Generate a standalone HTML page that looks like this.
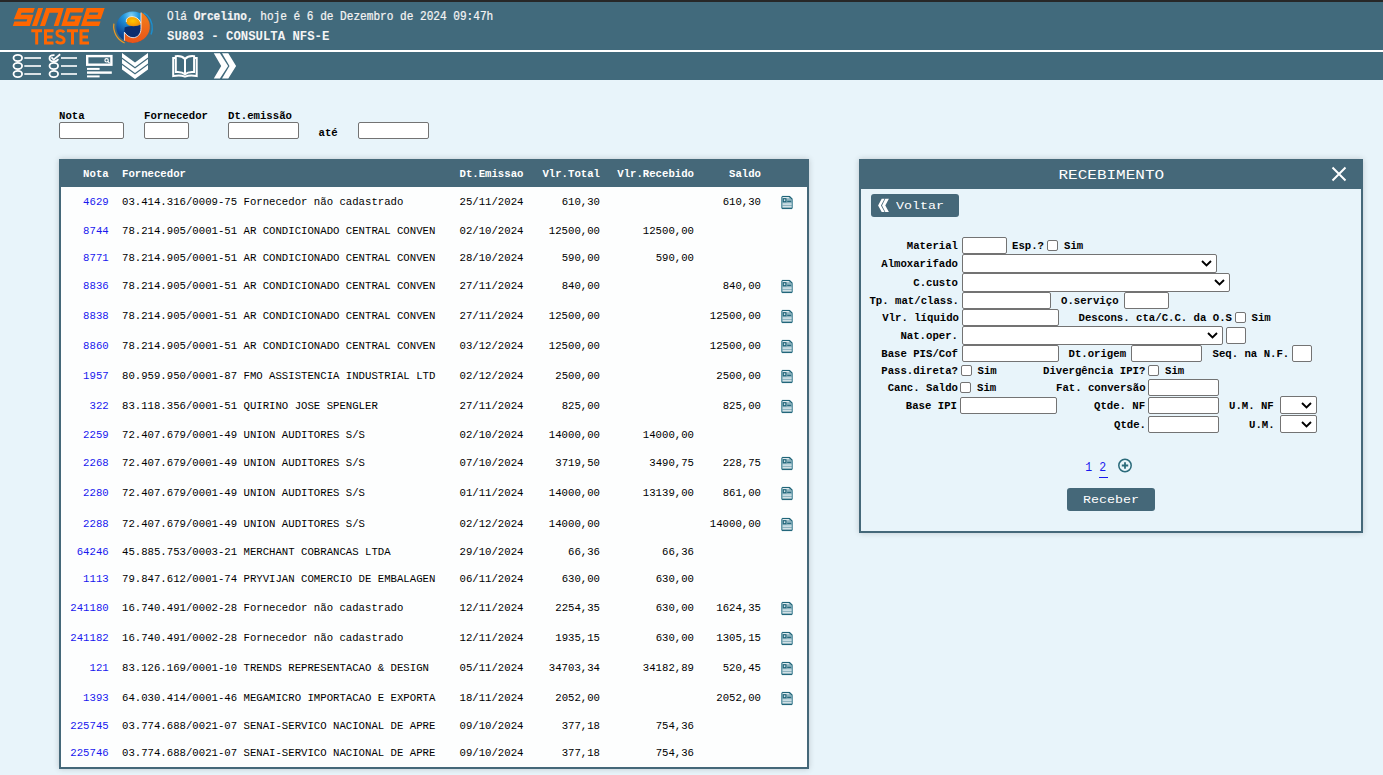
<!DOCTYPE html>
<html><head><meta charset="utf-8"><title>SU803 - CONSULTA NFS-E</title>
<style>
html,body{margin:0;padding:0;}
body{width:1383px;height:775px;overflow:hidden;position:relative;background:#e8f4fa;font-family:"Liberation Mono", monospace;}
.t{position:absolute;white-space:pre;font-family:"Liberation Mono", monospace;}
.abs{position:absolute;}
.inp{position:absolute;box-sizing:border-box;background:#fff;border:1px solid #737373;border-radius:2px;}
.chk{position:absolute;box-sizing:border-box;width:11px;height:11px;background:#fff;border:1px solid #737373;border-radius:2px;}
.btn{position:absolute;background:#456879;border-radius:3px;}
.ic{position:absolute;width:12px;height:15px;}
.ic svg{display:block}
.hdr{position:absolute;left:0;top:0;width:1383px;height:80px;background:#416a7c;}
.tbl{position:absolute;left:59px;top:159px;width:750px;height:610px;box-sizing:border-box;border:2px solid #456879;background:#fdfefe;box-shadow:0 0 6px rgba(0,0,0,.18);}
.thd{position:absolute;left:59px;top:159px;width:750px;height:28px;background:#456879;}
.pnl{position:absolute;left:859px;top:159px;width:504px;height:374px;box-sizing:border-box;border:2px solid #456879;background:#e8f4fa;box-shadow:0 0 6px rgba(0,0,0,.18);}
.phd{position:absolute;left:859px;top:159px;width:504px;height:30px;background:#456879;}
</style></head><body>
<div class="hdr"></div>
<div class="abs" style="left:0;top:0;width:1383px;height:2px;background:#272727"></div>
<div class="abs" style="left:0;top:50px;width:1383px;height:2px;background:#fff"></div>
<svg class="abs" style="left:0;top:0" width="160" height="50" viewBox="0 0 160 50">
 <g fill="#ff6600" transform="matrix(1,0,-0.342,1,8.892,0)">
  <path d="M12.3 8 H28.6 V12.8 H17 V14.8 H29.7 V26 H12.8 V21.5 H25 V19.3 H11.6 Z"/>
  <path d="M32 8 H37 V26 H32 Z"/>
  <path d="M40 8 H57.6 L58.4 26 H53.7 V12.8 H45 V26 H40 Z"/>
  <path d="M60.5 8 H77.8 V12.6 H65.5 V21.45 H73 V19.5 H68 V15.66 H78.3 V26 H61.3 Z"/>
  <path fill-rule="evenodd" d="M80.5 8 H98.5 V19.1 H85 V21.45 H99 V26 H81 Z M85 12.4 H93.7 V14.76 H85 Z"/>
 </g>
 <g fill="#ff6600">
  <path d="M31.3 29.3 H42 V32.3 H38.2 V44.5 H35.2 V32.3 H31.3 Z"/>
  <path d="M44 29.3 H53.5 V32.3 H47 V35.5 H52.5 V38.4 H47 V41.5 H53.5 V44.5 H44 Z"/>
  <path d="M67 29.3 H78 V32.3 H74 V44.5 H71 V32.3 H67 Z"/>
  <path d="M79.5 29.3 H89 V32.3 H82.5 V35.5 H88 V38.4 H82.5 V41.5 H89 V44.5 H79.5 Z"/>
 </g>
 <path d="M64.1 32.4 C63.3 31.2 62.1 30.7 60.4 30.7 C58.2 30.7 56.9 31.8 56.9 33.5 C56.9 35.4 58.6 36.1 60.5 36.7 C62.8 37.4 64.2 38.4 64.2 40.3 C64.2 42.2 62.6 43.1 60.4 43.1 C58.5 43.1 57 42.4 56.1 41.1" fill="none" stroke="#ff6600" stroke-width="2.8"/>
 <defs>
  <radialGradient id="gb" cx="0.45" cy="0.12" r="0.95">
   <stop offset="0" stop-color="#7fd0f6"/><stop offset="0.25" stop-color="#2196dc"/><stop offset="0.65" stop-color="#0f4f9e"/><stop offset="1" stop-color="#0a3276"/>
  </radialGradient>
  <radialGradient id="gy" cx="0.45" cy="0.45" r="0.65">
   <stop offset="0" stop-color="#ffc700"/><stop offset="0.7" stop-color="#f59a00"/><stop offset="1" stop-color="#e07a10"/>
  </radialGradient>
  <linearGradient id="go" x1="0" y1="0" x2="0" y2="1">
   <stop offset="0" stop-color="#f2801c"/><stop offset="1" stop-color="#ea5418"/>
  </linearGradient>
 </defs>
 <g transform="translate(116.3,11.4)">
  <path d="M-2.4 12.3 C-3.6 20 0.5 28.3 8.3 31.6" fill="none" stroke="#f39a1e" stroke-width="1.2"/>
  <path d="M27.3 1.5 C33 4.3 36.6 11 35.9 18.2 C35.7 19.9 35.3 21.5 34.7 23" fill="none" stroke="#1b8fd0" stroke-width="1.4"/>
  <ellipse cx="16.5" cy="15.65" rx="16.5" ry="15.65" fill="url(#gb)"/>
  <path d="M8.3 16 C11 14.6 21 14.2 24.6 13.6 V23 C22.5 25.5 19.5 26.4 16.7 26.3 C13 26.1 10 23.5 8.1 20.8 Z" fill="#0b2d6e"/>
  <path d="M24.6 11.9 C23 7 19 5.25 15.6 5.25 C12 5.25 9.8 7.2 9.8 9.6 C9.8 12.8 12.5 14.8 17 14.8 C20 14.8 23 14 24.6 12.8 Z" fill="url(#gy)"/>
  <path d="M10.1 10.6 C9.4 7.4 12 5.25 15.6 5.25 C19 5.25 22.8 7 24.4 11.5" fill="none" stroke="#fff" stroke-width="0.8"/>
  <path d="M24.7 0.95 A16.5 15.65 0 0 1 8.1 29.4 V20.8 C10 23.6 13 26.3 16.7 26.3 C21 26.3 24.7 23 24.7 17 Z" fill="url(#go)"/>
  <path d="M24.7 1.2 V17 C24.7 23 21 26.3 16.7 26.3 C13 26.3 10 23.6 8.1 20.8 V29.2" fill="none" stroke="#fff" stroke-width="0.8"/>
 </g>
</svg>
<div class="t" style="left:167px;top:10.2px;font-size:11.1px;line-height:14px;color:#f4f4f4;-webkit-text-stroke:0.2px #f4f4f4;transform:scaleY(1.12);transform-origin:0 11px">Olá <b>Orcelino</b>, hoje é 6 de Dezembro de 2024 09:47h</div>
<div class="t" style="left:167px;top:29px;font-size:12.3px;line-height:16px;color:#f4f4f4;font-weight:bold;transform:scaleY(1.05);transform-origin:0 12px">SU803 - CONSULTA NFS-E</div>
<svg class="abs" style="left:0;top:52px" width="250" height="28" viewBox="0 52 250 28">
 <g fill="none" stroke="#fff" stroke-width="1.8">
  <ellipse cx="17.8" cy="58" rx="4.3" ry="3.1"/>
  <ellipse cx="17.8" cy="66" rx="4.3" ry="3.1"/>
  <ellipse cx="17.8" cy="74" rx="4.3" ry="3.1"/>
  <ellipse cx="53.8" cy="66" rx="4.3" ry="3.1"/>
  <ellipse cx="53.8" cy="74" rx="4.3" ry="3.1"/>
  <path d="M54.5 55.2 C54.2 55.2 54 55.2 53.8 55.2 C51.3 55.2 49.5 56.5 49.5 58.3 C49.5 60.1 51.3 61.5 53.8 61.5 C56.1 61.5 57.8 60.4 58 58.9"/>
  <path d="M51.4 57.4 L53.7 59.6 L60.2 54.2" stroke-width="1.8"/>
 </g>
 <g fill="#d9e1e5">
  <rect x="24.3" y="57" width="16.7" height="2"/>
  <rect x="24.3" y="65" width="16.7" height="2"/>
  <rect x="24.3" y="73" width="16.7" height="2"/>
  <rect x="61" y="57" width="16" height="2"/>
  <rect x="61" y="65" width="16" height="2"/>
  <rect x="61" y="73" width="16" height="2"/>
 </g>
 <rect x="87.2" y="56.1" width="24.2" height="8.6" fill="none" stroke="#fff" stroke-width="2.4"/>
 <circle cx="106.6" cy="60.3" r="1.7" fill="none" stroke="#fff" stroke-width="1.2"/>
 <path d="M107.8 61.5 L109.6 63.2" stroke="#fff" stroke-width="1.2"/>
 <g fill="#fff">
  <rect x="87" y="67.9" width="12.6" height="2"/>
  <rect x="87" y="71.4" width="24.8" height="2.4"/>
  <rect x="87" y="75.4" width="12.6" height="2"/>
 </g>
 <g fill="#fff">
  <path d="M122 53.1 L135 62.6 L148 53.1 V57.6 L135 67.1 L122 57.6 Z"/>
  <path d="M122 59 L135 68.5 L148 59 V63.5 L135 73 L122 63.5 Z"/>
  <path d="M122 64.9 L135 74.4 L148 64.9 V69.5 L135 79 L122 69.5 Z"/>
 </g>
 <g fill="none" stroke="#fff" stroke-width="2">
  <path d="M175.8 56.2 C179.5 55.8 183 56.8 185 59 C187 56.8 190.5 55.8 194.1 56.2 V72 C190.5 71.6 187 72.4 185 74.2 C183 72.4 179.5 71.6 175.8 72 Z"/>
  <path d="M185 59 V74.2"/>
  <path d="M175.8 58 H173.2 V76 C177 75.3 181.5 75.2 185 76.6 C188.5 75.2 193 75.3 196.7 76 V58 H194.1"/>
 </g>
 <g fill="#fff">
  <path d="M213.8 53.3 H219.9 L228.1 65.9 L219.9 78.5 H213.8 L221.2 65.9 Z"/>
  <path d="M222 53.3 H228.3 L236.1 65.9 L228.3 78.5 H222 L229.5 65.9 Z"/>
 </g>
</svg>

<div class="t" style="left:59px;top:109.66px;font-size:10.667px;line-height:13px;font-weight:bold;color:#000;">Nota</div>
<div class="t" style="left:144px;top:109.66px;font-size:10.667px;line-height:13px;font-weight:bold;color:#000;">Fornecedor</div>
<div class="t" style="left:228px;top:109.66px;font-size:10.667px;line-height:13px;font-weight:bold;color:#000;">Dt.emissão</div>
<div class="t" style="left:318.5px;top:126.66px;font-size:10.667px;line-height:13px;font-weight:bold;color:#000;">até</div>
<div class="inp" style="left:59px;top:122px;width:65px;height:17px;"></div>
<div class="inp" style="left:144px;top:122px;width:45px;height:17px;"></div>
<div class="inp" style="left:228px;top:122px;width:71px;height:17px;"></div>
<div class="inp" style="left:358px;top:122px;width:71px;height:17px;"></div>
<div class="tbl"></div>
<div class="thd"></div>
<div class="t" style="right:1274.3px;top:167.66px;font-size:10.667px;line-height:13px;font-weight:bold;color:#fff;">Nota</div>
<div class="t" style="left:122px;top:167.66px;font-size:10.667px;line-height:13px;font-weight:bold;color:#fff;">Fornecedor</div>
<div class="t" style="left:459.5px;top:167.66px;font-size:10.667px;line-height:13px;font-weight:bold;color:#fff;">Dt.Emissao</div>
<div class="t" style="right:783px;top:167.66px;font-size:10.667px;line-height:13px;font-weight:bold;color:#fff;">Vlr.Total</div>
<div class="t" style="right:689px;top:167.66px;font-size:10.667px;line-height:13px;font-weight:bold;color:#fff;">Vlr.Recebido</div>
<div class="t" style="right:622px;top:167.66px;font-size:10.667px;line-height:13px;font-weight:bold;color:#fff;">Saldo</div>
<div class="t" style="right:1274.3px;top:195.66px;font-size:10.667px;line-height:13px;font-weight:normal;color:#1818ee;">4629</div>
<div class="t" style="left:122px;top:195.66px;font-size:10.667px;line-height:13px;font-weight:normal;color:#000;">03.414.316/0009-75 Fornecedor não cadastrado</div>
<div class="t" style="left:459.5px;top:195.66px;font-size:10.667px;line-height:13px;font-weight:normal;color:#000;">25/11/2024</div>
<div class="t" style="right:783px;top:195.66px;font-size:10.667px;line-height:13px;font-weight:normal;color:#000;">610,30</div>
<div class="t" style="right:622px;top:195.66px;font-size:10.667px;line-height:13px;font-weight:normal;color:#000;">610,30</div>
<div class="ic" style="left:781px;top:195px"><svg width="12" height="15" viewBox="0 0 12 15"><path d="M1.5 1.4 H8.5 L11.3 4.2 V13 Q11.3 13.6 10.7 13.6 H1.3 Q0.7 13.6 0.7 13 V2.2 Q0.7 1.4 1.5 1.4Z" fill="#8db3bf" stroke="#3a7d8f" stroke-width="0.9"/><path d="M1.2 1.5 H8.6 L11.2 4.1" fill="none" stroke="#1f6478" stroke-width="1.2"/><rect x="1.9" y="2.3" width="6" height="0.9" fill="#fff"/><rect x="2.3" y="3.7" width="2.6" height="3" fill="#cfe0e5" stroke="#1f6478" stroke-width="1.1"/><rect x="6.2" y="5.8" width="4" height="1.1" fill="#1f6478"/><rect x="1.7" y="8.2" width="8.8" height="1.8" fill="#c9dde3"/><rect x="1.7" y="11.4" width="8.8" height="1.1" fill="#fff"/><path d="M1 13.3 H11" stroke="#1f6478" stroke-width="1.2"/></svg></div>
<div class="t" style="right:1274.3px;top:224.66px;font-size:10.667px;line-height:13px;font-weight:normal;color:#1818ee;">8744</div>
<div class="t" style="left:122px;top:224.66px;font-size:10.667px;line-height:13px;font-weight:normal;color:#000;">78.214.905/0001-51 AR CONDICIONADO CENTRAL CONVEN</div>
<div class="t" style="left:459.5px;top:224.66px;font-size:10.667px;line-height:13px;font-weight:normal;color:#000;">02/10/2024</div>
<div class="t" style="right:783px;top:224.66px;font-size:10.667px;line-height:13px;font-weight:normal;color:#000;">12500,00</div>
<div class="t" style="right:689px;top:224.66px;font-size:10.667px;line-height:13px;font-weight:normal;color:#000;">12500,00</div>
<div class="t" style="right:1274.3px;top:251.66px;font-size:10.667px;line-height:13px;font-weight:normal;color:#1818ee;">8771</div>
<div class="t" style="left:122px;top:251.66px;font-size:10.667px;line-height:13px;font-weight:normal;color:#000;">78.214.905/0001-51 AR CONDICIONADO CENTRAL CONVEN</div>
<div class="t" style="left:459.5px;top:251.66px;font-size:10.667px;line-height:13px;font-weight:normal;color:#000;">28/10/2024</div>
<div class="t" style="right:783px;top:251.66px;font-size:10.667px;line-height:13px;font-weight:normal;color:#000;">590,00</div>
<div class="t" style="right:689px;top:251.66px;font-size:10.667px;line-height:13px;font-weight:normal;color:#000;">590,00</div>
<div class="t" style="right:1274.3px;top:279.66px;font-size:10.667px;line-height:13px;font-weight:normal;color:#1818ee;">8836</div>
<div class="t" style="left:122px;top:279.66px;font-size:10.667px;line-height:13px;font-weight:normal;color:#000;">78.214.905/0001-51 AR CONDICIONADO CENTRAL CONVEN</div>
<div class="t" style="left:459.5px;top:279.66px;font-size:10.667px;line-height:13px;font-weight:normal;color:#000;">27/11/2024</div>
<div class="t" style="right:783px;top:279.66px;font-size:10.667px;line-height:13px;font-weight:normal;color:#000;">840,00</div>
<div class="t" style="right:622px;top:279.66px;font-size:10.667px;line-height:13px;font-weight:normal;color:#000;">840,00</div>
<div class="ic" style="left:781px;top:279px"><svg width="12" height="15" viewBox="0 0 12 15"><path d="M1.5 1.4 H8.5 L11.3 4.2 V13 Q11.3 13.6 10.7 13.6 H1.3 Q0.7 13.6 0.7 13 V2.2 Q0.7 1.4 1.5 1.4Z" fill="#8db3bf" stroke="#3a7d8f" stroke-width="0.9"/><path d="M1.2 1.5 H8.6 L11.2 4.1" fill="none" stroke="#1f6478" stroke-width="1.2"/><rect x="1.9" y="2.3" width="6" height="0.9" fill="#fff"/><rect x="2.3" y="3.7" width="2.6" height="3" fill="#cfe0e5" stroke="#1f6478" stroke-width="1.1"/><rect x="6.2" y="5.8" width="4" height="1.1" fill="#1f6478"/><rect x="1.7" y="8.2" width="8.8" height="1.8" fill="#c9dde3"/><rect x="1.7" y="11.4" width="8.8" height="1.1" fill="#fff"/><path d="M1 13.3 H11" stroke="#1f6478" stroke-width="1.2"/></svg></div>
<div class="t" style="right:1274.3px;top:309.66px;font-size:10.667px;line-height:13px;font-weight:normal;color:#1818ee;">8838</div>
<div class="t" style="left:122px;top:309.66px;font-size:10.667px;line-height:13px;font-weight:normal;color:#000;">78.214.905/0001-51 AR CONDICIONADO CENTRAL CONVEN</div>
<div class="t" style="left:459.5px;top:309.66px;font-size:10.667px;line-height:13px;font-weight:normal;color:#000;">27/11/2024</div>
<div class="t" style="right:783px;top:309.66px;font-size:10.667px;line-height:13px;font-weight:normal;color:#000;">12500,00</div>
<div class="t" style="right:622px;top:309.66px;font-size:10.667px;line-height:13px;font-weight:normal;color:#000;">12500,00</div>
<div class="ic" style="left:781px;top:309px"><svg width="12" height="15" viewBox="0 0 12 15"><path d="M1.5 1.4 H8.5 L11.3 4.2 V13 Q11.3 13.6 10.7 13.6 H1.3 Q0.7 13.6 0.7 13 V2.2 Q0.7 1.4 1.5 1.4Z" fill="#8db3bf" stroke="#3a7d8f" stroke-width="0.9"/><path d="M1.2 1.5 H8.6 L11.2 4.1" fill="none" stroke="#1f6478" stroke-width="1.2"/><rect x="1.9" y="2.3" width="6" height="0.9" fill="#fff"/><rect x="2.3" y="3.7" width="2.6" height="3" fill="#cfe0e5" stroke="#1f6478" stroke-width="1.1"/><rect x="6.2" y="5.8" width="4" height="1.1" fill="#1f6478"/><rect x="1.7" y="8.2" width="8.8" height="1.8" fill="#c9dde3"/><rect x="1.7" y="11.4" width="8.8" height="1.1" fill="#fff"/><path d="M1 13.3 H11" stroke="#1f6478" stroke-width="1.2"/></svg></div>
<div class="t" style="right:1274.3px;top:339.66px;font-size:10.667px;line-height:13px;font-weight:normal;color:#1818ee;">8860</div>
<div class="t" style="left:122px;top:339.66px;font-size:10.667px;line-height:13px;font-weight:normal;color:#000;">78.214.905/0001-51 AR CONDICIONADO CENTRAL CONVEN</div>
<div class="t" style="left:459.5px;top:339.66px;font-size:10.667px;line-height:13px;font-weight:normal;color:#000;">03/12/2024</div>
<div class="t" style="right:783px;top:339.66px;font-size:10.667px;line-height:13px;font-weight:normal;color:#000;">12500,00</div>
<div class="t" style="right:622px;top:339.66px;font-size:10.667px;line-height:13px;font-weight:normal;color:#000;">12500,00</div>
<div class="ic" style="left:781px;top:339px"><svg width="12" height="15" viewBox="0 0 12 15"><path d="M1.5 1.4 H8.5 L11.3 4.2 V13 Q11.3 13.6 10.7 13.6 H1.3 Q0.7 13.6 0.7 13 V2.2 Q0.7 1.4 1.5 1.4Z" fill="#8db3bf" stroke="#3a7d8f" stroke-width="0.9"/><path d="M1.2 1.5 H8.6 L11.2 4.1" fill="none" stroke="#1f6478" stroke-width="1.2"/><rect x="1.9" y="2.3" width="6" height="0.9" fill="#fff"/><rect x="2.3" y="3.7" width="2.6" height="3" fill="#cfe0e5" stroke="#1f6478" stroke-width="1.1"/><rect x="6.2" y="5.8" width="4" height="1.1" fill="#1f6478"/><rect x="1.7" y="8.2" width="8.8" height="1.8" fill="#c9dde3"/><rect x="1.7" y="11.4" width="8.8" height="1.1" fill="#fff"/><path d="M1 13.3 H11" stroke="#1f6478" stroke-width="1.2"/></svg></div>
<div class="t" style="right:1274.3px;top:369.66px;font-size:10.667px;line-height:13px;font-weight:normal;color:#1818ee;">1957</div>
<div class="t" style="left:122px;top:369.66px;font-size:10.667px;line-height:13px;font-weight:normal;color:#000;">80.959.950/0001-87 FMO ASSISTENCIA INDUSTRIAL LTD</div>
<div class="t" style="left:459.5px;top:369.66px;font-size:10.667px;line-height:13px;font-weight:normal;color:#000;">02/12/2024</div>
<div class="t" style="right:783px;top:369.66px;font-size:10.667px;line-height:13px;font-weight:normal;color:#000;">2500,00</div>
<div class="t" style="right:622px;top:369.66px;font-size:10.667px;line-height:13px;font-weight:normal;color:#000;">2500,00</div>
<div class="ic" style="left:781px;top:369px"><svg width="12" height="15" viewBox="0 0 12 15"><path d="M1.5 1.4 H8.5 L11.3 4.2 V13 Q11.3 13.6 10.7 13.6 H1.3 Q0.7 13.6 0.7 13 V2.2 Q0.7 1.4 1.5 1.4Z" fill="#8db3bf" stroke="#3a7d8f" stroke-width="0.9"/><path d="M1.2 1.5 H8.6 L11.2 4.1" fill="none" stroke="#1f6478" stroke-width="1.2"/><rect x="1.9" y="2.3" width="6" height="0.9" fill="#fff"/><rect x="2.3" y="3.7" width="2.6" height="3" fill="#cfe0e5" stroke="#1f6478" stroke-width="1.1"/><rect x="6.2" y="5.8" width="4" height="1.1" fill="#1f6478"/><rect x="1.7" y="8.2" width="8.8" height="1.8" fill="#c9dde3"/><rect x="1.7" y="11.4" width="8.8" height="1.1" fill="#fff"/><path d="M1 13.3 H11" stroke="#1f6478" stroke-width="1.2"/></svg></div>
<div class="t" style="right:1274.3px;top:399.66px;font-size:10.667px;line-height:13px;font-weight:normal;color:#1818ee;">322</div>
<div class="t" style="left:122px;top:399.66px;font-size:10.667px;line-height:13px;font-weight:normal;color:#000;">83.118.356/0001-51 QUIRINO JOSE SPENGLER</div>
<div class="t" style="left:459.5px;top:399.66px;font-size:10.667px;line-height:13px;font-weight:normal;color:#000;">27/11/2024</div>
<div class="t" style="right:783px;top:399.66px;font-size:10.667px;line-height:13px;font-weight:normal;color:#000;">825,00</div>
<div class="t" style="right:622px;top:399.66px;font-size:10.667px;line-height:13px;font-weight:normal;color:#000;">825,00</div>
<div class="ic" style="left:781px;top:399px"><svg width="12" height="15" viewBox="0 0 12 15"><path d="M1.5 1.4 H8.5 L11.3 4.2 V13 Q11.3 13.6 10.7 13.6 H1.3 Q0.7 13.6 0.7 13 V2.2 Q0.7 1.4 1.5 1.4Z" fill="#8db3bf" stroke="#3a7d8f" stroke-width="0.9"/><path d="M1.2 1.5 H8.6 L11.2 4.1" fill="none" stroke="#1f6478" stroke-width="1.2"/><rect x="1.9" y="2.3" width="6" height="0.9" fill="#fff"/><rect x="2.3" y="3.7" width="2.6" height="3" fill="#cfe0e5" stroke="#1f6478" stroke-width="1.1"/><rect x="6.2" y="5.8" width="4" height="1.1" fill="#1f6478"/><rect x="1.7" y="8.2" width="8.8" height="1.8" fill="#c9dde3"/><rect x="1.7" y="11.4" width="8.8" height="1.1" fill="#fff"/><path d="M1 13.3 H11" stroke="#1f6478" stroke-width="1.2"/></svg></div>
<div class="t" style="right:1274.3px;top:428.66px;font-size:10.667px;line-height:13px;font-weight:normal;color:#1818ee;">2259</div>
<div class="t" style="left:122px;top:428.66px;font-size:10.667px;line-height:13px;font-weight:normal;color:#000;">72.407.679/0001-49 UNION AUDITORES S/S</div>
<div class="t" style="left:459.5px;top:428.66px;font-size:10.667px;line-height:13px;font-weight:normal;color:#000;">02/10/2024</div>
<div class="t" style="right:783px;top:428.66px;font-size:10.667px;line-height:13px;font-weight:normal;color:#000;">14000,00</div>
<div class="t" style="right:689px;top:428.66px;font-size:10.667px;line-height:13px;font-weight:normal;color:#000;">14000,00</div>
<div class="t" style="right:1274.3px;top:456.66px;font-size:10.667px;line-height:13px;font-weight:normal;color:#1818ee;">2268</div>
<div class="t" style="left:122px;top:456.66px;font-size:10.667px;line-height:13px;font-weight:normal;color:#000;">72.407.679/0001-49 UNION AUDITORES S/S</div>
<div class="t" style="left:459.5px;top:456.66px;font-size:10.667px;line-height:13px;font-weight:normal;color:#000;">07/10/2024</div>
<div class="t" style="right:783px;top:456.66px;font-size:10.667px;line-height:13px;font-weight:normal;color:#000;">3719,50</div>
<div class="t" style="right:689px;top:456.66px;font-size:10.667px;line-height:13px;font-weight:normal;color:#000;">3490,75</div>
<div class="t" style="right:622px;top:456.66px;font-size:10.667px;line-height:13px;font-weight:normal;color:#000;">228,75</div>
<div class="ic" style="left:781px;top:456px"><svg width="12" height="15" viewBox="0 0 12 15"><path d="M1.5 1.4 H8.5 L11.3 4.2 V13 Q11.3 13.6 10.7 13.6 H1.3 Q0.7 13.6 0.7 13 V2.2 Q0.7 1.4 1.5 1.4Z" fill="#8db3bf" stroke="#3a7d8f" stroke-width="0.9"/><path d="M1.2 1.5 H8.6 L11.2 4.1" fill="none" stroke="#1f6478" stroke-width="1.2"/><rect x="1.9" y="2.3" width="6" height="0.9" fill="#fff"/><rect x="2.3" y="3.7" width="2.6" height="3" fill="#cfe0e5" stroke="#1f6478" stroke-width="1.1"/><rect x="6.2" y="5.8" width="4" height="1.1" fill="#1f6478"/><rect x="1.7" y="8.2" width="8.8" height="1.8" fill="#c9dde3"/><rect x="1.7" y="11.4" width="8.8" height="1.1" fill="#fff"/><path d="M1 13.3 H11" stroke="#1f6478" stroke-width="1.2"/></svg></div>
<div class="t" style="right:1274.3px;top:486.66px;font-size:10.667px;line-height:13px;font-weight:normal;color:#1818ee;">2280</div>
<div class="t" style="left:122px;top:486.66px;font-size:10.667px;line-height:13px;font-weight:normal;color:#000;">72.407.679/0001-49 UNION AUDITORES S/S</div>
<div class="t" style="left:459.5px;top:486.66px;font-size:10.667px;line-height:13px;font-weight:normal;color:#000;">01/11/2024</div>
<div class="t" style="right:783px;top:486.66px;font-size:10.667px;line-height:13px;font-weight:normal;color:#000;">14000,00</div>
<div class="t" style="right:689px;top:486.66px;font-size:10.667px;line-height:13px;font-weight:normal;color:#000;">13139,00</div>
<div class="t" style="right:622px;top:486.66px;font-size:10.667px;line-height:13px;font-weight:normal;color:#000;">861,00</div>
<div class="ic" style="left:781px;top:486px"><svg width="12" height="15" viewBox="0 0 12 15"><path d="M1.5 1.4 H8.5 L11.3 4.2 V13 Q11.3 13.6 10.7 13.6 H1.3 Q0.7 13.6 0.7 13 V2.2 Q0.7 1.4 1.5 1.4Z" fill="#8db3bf" stroke="#3a7d8f" stroke-width="0.9"/><path d="M1.2 1.5 H8.6 L11.2 4.1" fill="none" stroke="#1f6478" stroke-width="1.2"/><rect x="1.9" y="2.3" width="6" height="0.9" fill="#fff"/><rect x="2.3" y="3.7" width="2.6" height="3" fill="#cfe0e5" stroke="#1f6478" stroke-width="1.1"/><rect x="6.2" y="5.8" width="4" height="1.1" fill="#1f6478"/><rect x="1.7" y="8.2" width="8.8" height="1.8" fill="#c9dde3"/><rect x="1.7" y="11.4" width="8.8" height="1.1" fill="#fff"/><path d="M1 13.3 H11" stroke="#1f6478" stroke-width="1.2"/></svg></div>
<div class="t" style="right:1274.3px;top:517.66px;font-size:10.667px;line-height:13px;font-weight:normal;color:#1818ee;">2288</div>
<div class="t" style="left:122px;top:517.66px;font-size:10.667px;line-height:13px;font-weight:normal;color:#000;">72.407.679/0001-49 UNION AUDITORES S/S</div>
<div class="t" style="left:459.5px;top:517.66px;font-size:10.667px;line-height:13px;font-weight:normal;color:#000;">02/12/2024</div>
<div class="t" style="right:783px;top:517.66px;font-size:10.667px;line-height:13px;font-weight:normal;color:#000;">14000,00</div>
<div class="t" style="right:622px;top:517.66px;font-size:10.667px;line-height:13px;font-weight:normal;color:#000;">14000,00</div>
<div class="ic" style="left:781px;top:517px"><svg width="12" height="15" viewBox="0 0 12 15"><path d="M1.5 1.4 H8.5 L11.3 4.2 V13 Q11.3 13.6 10.7 13.6 H1.3 Q0.7 13.6 0.7 13 V2.2 Q0.7 1.4 1.5 1.4Z" fill="#8db3bf" stroke="#3a7d8f" stroke-width="0.9"/><path d="M1.2 1.5 H8.6 L11.2 4.1" fill="none" stroke="#1f6478" stroke-width="1.2"/><rect x="1.9" y="2.3" width="6" height="0.9" fill="#fff"/><rect x="2.3" y="3.7" width="2.6" height="3" fill="#cfe0e5" stroke="#1f6478" stroke-width="1.1"/><rect x="6.2" y="5.8" width="4" height="1.1" fill="#1f6478"/><rect x="1.7" y="8.2" width="8.8" height="1.8" fill="#c9dde3"/><rect x="1.7" y="11.4" width="8.8" height="1.1" fill="#fff"/><path d="M1 13.3 H11" stroke="#1f6478" stroke-width="1.2"/></svg></div>
<div class="t" style="right:1274.3px;top:545.66px;font-size:10.667px;line-height:13px;font-weight:normal;color:#1818ee;">64246</div>
<div class="t" style="left:122px;top:545.66px;font-size:10.667px;line-height:13px;font-weight:normal;color:#000;">45.885.753/0003-21 MERCHANT COBRANCAS LTDA</div>
<div class="t" style="left:459.5px;top:545.66px;font-size:10.667px;line-height:13px;font-weight:normal;color:#000;">29/10/2024</div>
<div class="t" style="right:783px;top:545.66px;font-size:10.667px;line-height:13px;font-weight:normal;color:#000;">66,36</div>
<div class="t" style="right:689px;top:545.66px;font-size:10.667px;line-height:13px;font-weight:normal;color:#000;">66,36</div>
<div class="t" style="right:1274.3px;top:572.66px;font-size:10.667px;line-height:13px;font-weight:normal;color:#1818ee;">1113</div>
<div class="t" style="left:122px;top:572.66px;font-size:10.667px;line-height:13px;font-weight:normal;color:#000;">79.847.612/0001-74 PRYVIJAN COMERCIO DE EMBALAGEN</div>
<div class="t" style="left:459.5px;top:572.66px;font-size:10.667px;line-height:13px;font-weight:normal;color:#000;">06/11/2024</div>
<div class="t" style="right:783px;top:572.66px;font-size:10.667px;line-height:13px;font-weight:normal;color:#000;">630,00</div>
<div class="t" style="right:689px;top:572.66px;font-size:10.667px;line-height:13px;font-weight:normal;color:#000;">630,00</div>
<div class="t" style="right:1274.3px;top:601.66px;font-size:10.667px;line-height:13px;font-weight:normal;color:#1818ee;">241180</div>
<div class="t" style="left:122px;top:601.66px;font-size:10.667px;line-height:13px;font-weight:normal;color:#000;">16.740.491/0002-28 Fornecedor não cadastrado</div>
<div class="t" style="left:459.5px;top:601.66px;font-size:10.667px;line-height:13px;font-weight:normal;color:#000;">12/11/2024</div>
<div class="t" style="right:783px;top:601.66px;font-size:10.667px;line-height:13px;font-weight:normal;color:#000;">2254,35</div>
<div class="t" style="right:689px;top:601.66px;font-size:10.667px;line-height:13px;font-weight:normal;color:#000;">630,00</div>
<div class="t" style="right:622px;top:601.66px;font-size:10.667px;line-height:13px;font-weight:normal;color:#000;">1624,35</div>
<div class="ic" style="left:781px;top:601px"><svg width="12" height="15" viewBox="0 0 12 15"><path d="M1.5 1.4 H8.5 L11.3 4.2 V13 Q11.3 13.6 10.7 13.6 H1.3 Q0.7 13.6 0.7 13 V2.2 Q0.7 1.4 1.5 1.4Z" fill="#8db3bf" stroke="#3a7d8f" stroke-width="0.9"/><path d="M1.2 1.5 H8.6 L11.2 4.1" fill="none" stroke="#1f6478" stroke-width="1.2"/><rect x="1.9" y="2.3" width="6" height="0.9" fill="#fff"/><rect x="2.3" y="3.7" width="2.6" height="3" fill="#cfe0e5" stroke="#1f6478" stroke-width="1.1"/><rect x="6.2" y="5.8" width="4" height="1.1" fill="#1f6478"/><rect x="1.7" y="8.2" width="8.8" height="1.8" fill="#c9dde3"/><rect x="1.7" y="11.4" width="8.8" height="1.1" fill="#fff"/><path d="M1 13.3 H11" stroke="#1f6478" stroke-width="1.2"/></svg></div>
<div class="t" style="right:1274.3px;top:631.66px;font-size:10.667px;line-height:13px;font-weight:normal;color:#1818ee;">241182</div>
<div class="t" style="left:122px;top:631.66px;font-size:10.667px;line-height:13px;font-weight:normal;color:#000;">16.740.491/0002-28 Fornecedor não cadastrado</div>
<div class="t" style="left:459.5px;top:631.66px;font-size:10.667px;line-height:13px;font-weight:normal;color:#000;">12/11/2024</div>
<div class="t" style="right:783px;top:631.66px;font-size:10.667px;line-height:13px;font-weight:normal;color:#000;">1935,15</div>
<div class="t" style="right:689px;top:631.66px;font-size:10.667px;line-height:13px;font-weight:normal;color:#000;">630,00</div>
<div class="t" style="right:622px;top:631.66px;font-size:10.667px;line-height:13px;font-weight:normal;color:#000;">1305,15</div>
<div class="ic" style="left:781px;top:631px"><svg width="12" height="15" viewBox="0 0 12 15"><path d="M1.5 1.4 H8.5 L11.3 4.2 V13 Q11.3 13.6 10.7 13.6 H1.3 Q0.7 13.6 0.7 13 V2.2 Q0.7 1.4 1.5 1.4Z" fill="#8db3bf" stroke="#3a7d8f" stroke-width="0.9"/><path d="M1.2 1.5 H8.6 L11.2 4.1" fill="none" stroke="#1f6478" stroke-width="1.2"/><rect x="1.9" y="2.3" width="6" height="0.9" fill="#fff"/><rect x="2.3" y="3.7" width="2.6" height="3" fill="#cfe0e5" stroke="#1f6478" stroke-width="1.1"/><rect x="6.2" y="5.8" width="4" height="1.1" fill="#1f6478"/><rect x="1.7" y="8.2" width="8.8" height="1.8" fill="#c9dde3"/><rect x="1.7" y="11.4" width="8.8" height="1.1" fill="#fff"/><path d="M1 13.3 H11" stroke="#1f6478" stroke-width="1.2"/></svg></div>
<div class="t" style="right:1274.3px;top:661.66px;font-size:10.667px;line-height:13px;font-weight:normal;color:#1818ee;">121</div>
<div class="t" style="left:122px;top:661.66px;font-size:10.667px;line-height:13px;font-weight:normal;color:#000;">83.126.169/0001-10 TRENDS REPRESENTACAO &amp; DESIGN</div>
<div class="t" style="left:459.5px;top:661.66px;font-size:10.667px;line-height:13px;font-weight:normal;color:#000;">05/11/2024</div>
<div class="t" style="right:783px;top:661.66px;font-size:10.667px;line-height:13px;font-weight:normal;color:#000;">34703,34</div>
<div class="t" style="right:689px;top:661.66px;font-size:10.667px;line-height:13px;font-weight:normal;color:#000;">34182,89</div>
<div class="t" style="right:622px;top:661.66px;font-size:10.667px;line-height:13px;font-weight:normal;color:#000;">520,45</div>
<div class="ic" style="left:781px;top:661px"><svg width="12" height="15" viewBox="0 0 12 15"><path d="M1.5 1.4 H8.5 L11.3 4.2 V13 Q11.3 13.6 10.7 13.6 H1.3 Q0.7 13.6 0.7 13 V2.2 Q0.7 1.4 1.5 1.4Z" fill="#8db3bf" stroke="#3a7d8f" stroke-width="0.9"/><path d="M1.2 1.5 H8.6 L11.2 4.1" fill="none" stroke="#1f6478" stroke-width="1.2"/><rect x="1.9" y="2.3" width="6" height="0.9" fill="#fff"/><rect x="2.3" y="3.7" width="2.6" height="3" fill="#cfe0e5" stroke="#1f6478" stroke-width="1.1"/><rect x="6.2" y="5.8" width="4" height="1.1" fill="#1f6478"/><rect x="1.7" y="8.2" width="8.8" height="1.8" fill="#c9dde3"/><rect x="1.7" y="11.4" width="8.8" height="1.1" fill="#fff"/><path d="M1 13.3 H11" stroke="#1f6478" stroke-width="1.2"/></svg></div>
<div class="t" style="right:1274.3px;top:691.66px;font-size:10.667px;line-height:13px;font-weight:normal;color:#1818ee;">1393</div>
<div class="t" style="left:122px;top:691.66px;font-size:10.667px;line-height:13px;font-weight:normal;color:#000;">64.030.414/0001-46 MEGAMICRO IMPORTACAO E EXPORTA</div>
<div class="t" style="left:459.5px;top:691.66px;font-size:10.667px;line-height:13px;font-weight:normal;color:#000;">18/11/2024</div>
<div class="t" style="right:783px;top:691.66px;font-size:10.667px;line-height:13px;font-weight:normal;color:#000;">2052,00</div>
<div class="t" style="right:622px;top:691.66px;font-size:10.667px;line-height:13px;font-weight:normal;color:#000;">2052,00</div>
<div class="ic" style="left:781px;top:691px"><svg width="12" height="15" viewBox="0 0 12 15"><path d="M1.5 1.4 H8.5 L11.3 4.2 V13 Q11.3 13.6 10.7 13.6 H1.3 Q0.7 13.6 0.7 13 V2.2 Q0.7 1.4 1.5 1.4Z" fill="#8db3bf" stroke="#3a7d8f" stroke-width="0.9"/><path d="M1.2 1.5 H8.6 L11.2 4.1" fill="none" stroke="#1f6478" stroke-width="1.2"/><rect x="1.9" y="2.3" width="6" height="0.9" fill="#fff"/><rect x="2.3" y="3.7" width="2.6" height="3" fill="#cfe0e5" stroke="#1f6478" stroke-width="1.1"/><rect x="6.2" y="5.8" width="4" height="1.1" fill="#1f6478"/><rect x="1.7" y="8.2" width="8.8" height="1.8" fill="#c9dde3"/><rect x="1.7" y="11.4" width="8.8" height="1.1" fill="#fff"/><path d="M1 13.3 H11" stroke="#1f6478" stroke-width="1.2"/></svg></div>
<div class="t" style="right:1274.3px;top:719.66px;font-size:10.667px;line-height:13px;font-weight:normal;color:#1818ee;">225745</div>
<div class="t" style="left:122px;top:719.66px;font-size:10.667px;line-height:13px;font-weight:normal;color:#000;">03.774.688/0021-07 SENAI-SERVICO NACIONAL DE APRE</div>
<div class="t" style="left:459.5px;top:719.66px;font-size:10.667px;line-height:13px;font-weight:normal;color:#000;">09/10/2024</div>
<div class="t" style="right:783px;top:719.66px;font-size:10.667px;line-height:13px;font-weight:normal;color:#000;">377,18</div>
<div class="t" style="right:689px;top:719.66px;font-size:10.667px;line-height:13px;font-weight:normal;color:#000;">754,36</div>
<div class="t" style="right:1274.3px;top:746.66px;font-size:10.667px;line-height:13px;font-weight:normal;color:#1818ee;">225746</div>
<div class="t" style="left:122px;top:746.66px;font-size:10.667px;line-height:13px;font-weight:normal;color:#000;">03.774.688/0021-07 SENAI-SERVICO NACIONAL DE APRE</div>
<div class="t" style="left:459.5px;top:746.66px;font-size:10.667px;line-height:13px;font-weight:normal;color:#000;">09/10/2024</div>
<div class="t" style="right:783px;top:746.66px;font-size:10.667px;line-height:13px;font-weight:normal;color:#000;">377,18</div>
<div class="t" style="right:689px;top:746.66px;font-size:10.667px;line-height:13px;font-weight:normal;color:#000;">754,36</div>
<div class="pnl"></div>
<div class="phd"></div>
<div class="t" style="left:1058.5px;top:166.24px;font-size:16px;line-height:19px;font-weight:normal;color:#fff;transform:scaleY(0.85);transform-origin:0 13.76px;">RECEBIMENTO</div>
<svg class="abs" style="left:1331px;top:166px" width="16" height="16" viewBox="0 0 16 16"><path d="M1.5 1.5 L14.5 14.5 M14.5 1.5 L1.5 14.5" stroke="#fff" stroke-width="2"/></svg>
<div class="btn" style="left:871px;top:194px;width:88px;height:23px"></div>
<svg class="abs" style="left:877px;top:198px" width="13" height="15" viewBox="0 0 13 15"><path d="M4.7 0.8 H7.6 L4 7.5 L7.6 14.1 H4.7 L1.1 7.5 Z M8.3 0.8 H11.9 L8.3 7.5 L11.9 14.1 H8.3 L5 7.5 Z" fill="#fff"/></svg>
<div class="t" style="left:896px;top:197.75px;font-size:13.333px;line-height:16px;font-weight:normal;color:#fff;transform:scaleY(0.84);transform-origin:0 11.55px;">Voltar</div>
<div class="btn" style="left:1067px;top:488px;width:88px;height:23px"></div>
<div class="t" style="left:1083px;top:492.05px;font-size:13.333px;line-height:16px;font-weight:normal;color:#fff;transform:scaleY(0.84);transform-origin:0 11.55px;">Receber</div>
<div class="t" style="left:1085.2px;top:460.94px;font-size:11.5px;line-height:14px;font-weight:normal;color:#1818ee;transform:scaleY(1.06);transform-origin:0 10.06px;">1</div>
<div class="t" style="left:1099.2px;top:460.94px;font-size:11.5px;line-height:14px;font-weight:normal;color:#1818ee;transform:scaleY(1.06);transform-origin:0 10.06px;">2</div>
<div class="abs" style="left:1099px;top:477px;width:9px;height:1px;background:#1818ee"></div>
<svg class="abs" style="left:1117px;top:458px" width="16" height="15" viewBox="0 0 16 15"><circle cx="8" cy="7.5" r="6.2" fill="none" stroke="#2a6a7a" stroke-width="1.5"/><path d="M8 4.3 V10.7 M4.8 7.5 H11.2" stroke="#2a6a7a" stroke-width="1.8"/></svg>
<div class="t" style="right:425px;top:239.66px;font-size:10.667px;line-height:13px;font-weight:bold;color:#000;">Material</div>
<div class="inp" style="left:962px;top:237px;width:45px;height:17px;"></div>
<div class="t" style="left:1012px;top:239.66px;font-size:10.667px;line-height:13px;font-weight:bold;color:#000;">Esp.?</div>
<div class="chk" style="left:1047px;top:240px"></div>
<div class="t" style="left:1064px;top:239.66px;font-size:10.667px;line-height:13px;font-weight:bold;color:#000;">Sim</div>
<div class="t" style="right:425px;top:257.66px;font-size:10.667px;line-height:13px;font-weight:bold;color:#000;">Almoxarifado</div>
<div class="inp" style="left:962px;top:254px;width:255px;height:19px"><svg class="abs" style="right:4px;top:5.0px" width="11" height="7" viewBox="0 0 11 7"><path d="M1 1 L5.5 5.5 L10 1" fill="none" stroke="#000" stroke-width="1.9"/></svg></div>
<div class="t" style="right:425px;top:276.66px;font-size:10.667px;line-height:13px;font-weight:bold;color:#000;">C.custo</div>
<div class="inp" style="left:962px;top:273px;width:268px;height:19px"><svg class="abs" style="right:4px;top:5.0px" width="11" height="7" viewBox="0 0 11 7"><path d="M1 1 L5.5 5.5 L10 1" fill="none" stroke="#000" stroke-width="1.9"/></svg></div>
<div class="t" style="right:424px;top:294.66px;font-size:10.667px;line-height:13px;font-weight:bold;color:#000;">Tp. mat/class.</div>
<div class="inp" style="left:962px;top:292px;width:89px;height:17px;"></div>
<div class="t" style="left:1061px;top:294.66px;font-size:10.667px;line-height:13px;font-weight:bold;color:#000;">O.serviço</div>
<div class="inp" style="left:1124px;top:292px;width:45px;height:17px;"></div>
<div class="t" style="right:424px;top:311.66px;font-size:10.667px;line-height:13px;font-weight:bold;color:#000;">Vlr. líquido</div>
<div class="inp" style="left:962px;top:309px;width:97px;height:17px;"></div>
<div class="t" style="left:1078.5px;top:311.66px;font-size:10.667px;line-height:13px;font-weight:bold;color:#000;">Descons. cta/C.C. da O.S</div>
<div class="chk" style="left:1235px;top:312px"></div>
<div class="t" style="left:1251.5px;top:311.66px;font-size:10.667px;line-height:13px;font-weight:bold;color:#000;">Sim</div>
<div class="t" style="right:425px;top:329.66px;font-size:10.667px;line-height:13px;font-weight:bold;color:#000;">Nat.oper.</div>
<div class="inp" style="left:962px;top:326px;width:261px;height:19px"><svg class="abs" style="right:4px;top:5.0px" width="11" height="7" viewBox="0 0 11 7"><path d="M1 1 L5.5 5.5 L10 1" fill="none" stroke="#000" stroke-width="1.9"/></svg></div>
<div class="inp" style="left:1226px;top:327px;width:20px;height:17px;"></div>
<div class="t" style="right:425px;top:347.66px;font-size:10.667px;line-height:13px;font-weight:bold;color:#000;">Base PIS/Cof</div>
<div class="inp" style="left:962px;top:345px;width:97px;height:17px;"></div>
<div class="t" style="left:1068.5px;top:347.66px;font-size:10.667px;line-height:13px;font-weight:bold;color:#000;">Dt.origem</div>
<div class="inp" style="left:1131px;top:345px;width:71px;height:17px;"></div>
<div class="t" style="left:1212.5px;top:347.66px;font-size:10.667px;line-height:13px;font-weight:bold;color:#000;">Seq. na N.F.</div>
<div class="inp" style="left:1292px;top:345px;width:20px;height:17px;"></div>
<div class="t" style="right:425px;top:364.66px;font-size:10.667px;line-height:13px;font-weight:bold;color:#000;">Pass.direta?</div>
<div class="chk" style="left:961px;top:365px"></div>
<div class="t" style="left:977.5px;top:364.66px;font-size:10.667px;line-height:13px;font-weight:bold;color:#000;">Sim</div>
<div class="t" style="left:1043px;top:364.66px;font-size:10.667px;line-height:13px;font-weight:bold;color:#000;">Divergência IPI?</div>
<div class="chk" style="left:1148px;top:365px"></div>
<div class="t" style="left:1165px;top:364.66px;font-size:10.667px;line-height:13px;font-weight:bold;color:#000;">Sim</div>
<div class="t" style="right:425px;top:381.66px;font-size:10.667px;line-height:13px;font-weight:bold;color:#000;">Canc. Saldo</div>
<div class="chk" style="left:960px;top:382px"></div>
<div class="t" style="left:977px;top:381.66px;font-size:10.667px;line-height:13px;font-weight:bold;color:#000;">Sim</div>
<div class="t" style="left:1056px;top:381.66px;font-size:10.667px;line-height:13px;font-weight:bold;color:#000;">Fat. conversão</div>
<div class="inp" style="left:1148px;top:379px;width:71px;height:17px;"></div>
<div class="t" style="right:426px;top:399.66px;font-size:10.667px;line-height:13px;font-weight:bold;color:#000;">Base IPI</div>
<div class="inp" style="left:960px;top:397px;width:97px;height:17px;"></div>
<div class="t" style="left:1094px;top:399.66px;font-size:10.667px;line-height:13px;font-weight:bold;color:#000;">Qtde. NF</div>
<div class="inp" style="left:1148px;top:397px;width:71px;height:17px;"></div>
<div class="t" style="left:1229px;top:399.66px;font-size:10.667px;line-height:13px;font-weight:bold;color:#000;">U.M. NF</div>
<div class="inp" style="left:1280px;top:396px;width:37px;height:18px"><svg class="abs" style="right:4px;top:4.5px" width="11" height="7" viewBox="0 0 11 7"><path d="M1 1 L5.5 5.5 L10 1" fill="none" stroke="#000" stroke-width="1.9"/></svg></div>
<div class="t" style="left:1114px;top:418.66px;font-size:10.667px;line-height:13px;font-weight:bold;color:#000;">Qtde.</div>
<div class="inp" style="left:1148px;top:416px;width:71px;height:17px;"></div>
<div class="t" style="left:1249px;top:418.66px;font-size:10.667px;line-height:13px;font-weight:bold;color:#000;">U.M.</div>
<div class="inp" style="left:1280px;top:415px;width:37px;height:18px"><svg class="abs" style="right:4px;top:4.5px" width="11" height="7" viewBox="0 0 11 7"><path d="M1 1 L5.5 5.5 L10 1" fill="none" stroke="#000" stroke-width="1.9"/></svg></div>
</body></html>
